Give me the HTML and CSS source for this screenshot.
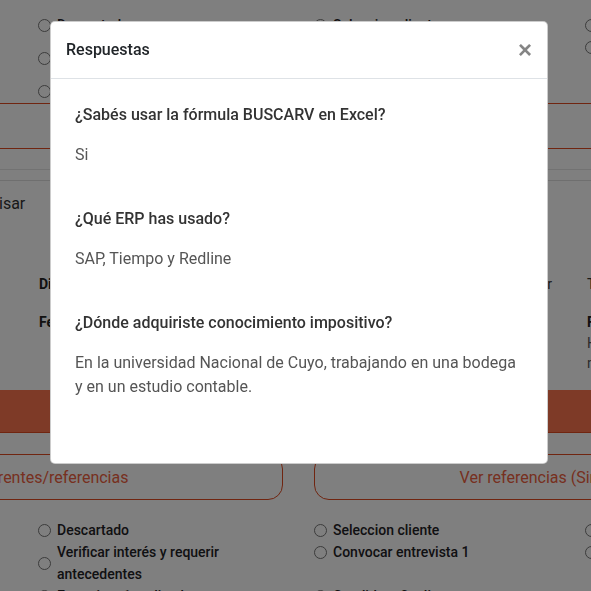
FILE: index.html
```html
<!DOCTYPE html>
<html lang="es">
<head>
<meta charset="utf-8">
<title>Respuestas</title>
<link rel="stylesheet" href="styles.css">
</head>
<body>
<div class="page">
  <div class="radios">
    <label class="radio"><span class="dot"></span><span class="lbl">Descartado</span></label>
    <label class="radio"><span class="dot"></span><span class="lbl">Seleccion cliente</span></label>
    <label class="radio"><span class="dot"></span><span class="lbl">Contratado</span></label>
    <label class="radio"><span class="dot"></span><span class="lbl">Verificar interés y requerir antecedentes</span></label>
    <label class="radio"><span class="dot"></span><span class="lbl">Convocar entrevista 1</span></label>
    <label class="radio"><span class="dot"></span><span class="lbl">En espera</span></label>
    <label class="radio"><span class="dot"></span><span class="lbl">Entrevista 1 realizada</span></label>
    <label class="radio"><span class="dot"></span><span class="lbl">Candidato finalista</span></label>
  </div>
  <div class="btn-row">
    <div class="box-outline"></div>
    <div class="box-outline"></div>
  </div>
  <div class="card-end"></div>

  <div class="card">
    <div class="card-head">Revisar</div>
    <div class="info">
      <div class="cell"><b>Disponibilidad:</b> Full time</div>
      <div class="cell right">Pretensión salarial: a convenir</div>
      <div class="cell">Teléfono: 261 555 0123</div>
      <div class="cell"><b>Fecha de nacimiento:</b> 12/03/1995</div>
      <div class="cell"></div>
      <div class="cell"><b>Formación:</b><p class="para">Hizo la carrera de Contador Público<br>nacional en la UNCuyo</p></div>
    </div>
    <div class="bar"></div>
    <div class="btn-row">
      <button class="btn-outline left">Ver referentes/referencias</button>
      <button class="btn-outline right">Ver referencias (Sin referencias)</button>
    </div>
    <div class="radios">
      <label class="radio"><span class="dot"></span><span class="lbl">Descartado</span></label>
      <label class="radio"><span class="dot"></span><span class="lbl">Seleccion cliente</span></label>
      <label class="radio"><span class="dot"></span><span class="lbl">Contratado</span></label>
      <label class="radio"><span class="dot"></span><span class="lbl">Verificar interés y requerir antecedentes</span></label>
      <label class="radio"><span class="dot"></span><span class="lbl">Convocar entrevista 1</span></label>
      <label class="radio"><span class="dot"></span><span class="lbl">En espera</span></label>
      <label class="radio"><span class="dot"></span><span class="lbl">Entrevista 1 realizada</span></label>
      <label class="radio"><span class="dot"></span><span class="lbl">Candidato finalista</span></label>
    </div>
  </div>
</div>

<div class="backdrop"></div>

<div class="modal">
  <div class="modal-header">
    <h5 class="modal-title">Respuestas</h5>
    <button class="close" aria-label="Cerrar">×</button>
  </div>
  <div class="modal-body">
    <p class="q">¿Sabés usar la fórmula BUSCARV en Excel?</p>
    <p class="a">Si</p>
    <p class="q">¿Qué ERP has usado?</p>
    <p class="a">SAP, Tiempo y Redline</p>
    <p class="q">¿Dónde adquiriste conocimiento impositivo?</p>
    <p class="a">En la universidad Nacional de Cuyo, trabajando en una bodega y en un estudio contable.</p>
  </div>
</div>
</body>
</html>
```

FILE: styles.css
```css
html, body {
  margin: 0;
  padding: 0;
  overflow: hidden;
  height: 100%;
  background: #ffffff;
  font-family: Roboto, "Liberation Sans", sans-serif;
  color: #212529;
}

.page {
  width: 1200px;
  margin-left: -300px;
  padding-top: 14px;
}

/* radio grid */
.radios {
  display: grid;
  grid-template-columns: 276px 271px 271px;
  margin-left: 338px;
  align-items: start;
}
.radio {
  display: flex;
  align-items: center;
  gap: 6px;
  font-size: 14px;
  font-weight: 500;
  line-height: 22px;
  color: #1f2226;
}
.dot {
  flex: none;
  width: 11px;
  height: 11px;
  border: 1px solid #777;
  border-radius: 50%;
  background: #fff;
}
.lbl { max-width: 210px; }

/* outlined buttons */
.btn-row {
  display: flex;
  gap: 31px;
  margin-left: 58px;
  margin-top: 1px;
}
.box-outline,
.btn-outline {
  flex: none;
  box-sizing: border-box;
  width: 525px;
  height: 46px;
  border: 1px solid #e04a20;
  border-radius: 15px;
  background: #fff;
}
.btn-outline {
  color: #ee6040;
  font-family: Roboto, "Liberation Sans", sans-serif;
  font-size: 16px;
  text-align: center;
  padding: 0;
}
.btn-outline.left { padding-left: 30px; }
.btn-outline.right { padding-right: 6px; }

.card-end {
  margin-top: 20px;
  border-bottom: 1px solid #e4e4e4;
}

.card {
  margin-top: 10px;
  border-top: 1px solid #dedede;
  padding-top: 11px;
}
.card-head {
  margin-left: 273px;
  font-size: 16px;
  line-height: 24px;
  color: #333;
}

.info {
  display: grid;
  grid-template-columns: 270px 278px 300px;
  row-gap: 16px;
  margin-left: 339px;
  margin-top: 57px;
  font-size: 14px;
  line-height: 22px;
  color: #333;
}
.info b { font-weight: 700; color: #222; }
.info .right { text-align: right; padding-right: 35px; }
.para {
  margin: 0;
  line-height: 20px;
  color: #555;
}

.bar {
  margin-top: 17px;
  height: 42px;
  background: #fc744e;
  border-bottom: 1px solid #e04a20;
}
.card .btn-row { margin-top: 21px; }
.card .radios { margin-top: 19px; }

/* overlay */
.backdrop {
  position: fixed;
  inset: 0;
  background: rgba(0, 0, 0, 0.5);
}

.modal {
  position: fixed;
  left: 50px;
  top: 21px;
  width: 498px;
  box-sizing: border-box;
  background: #fff;
  border: 1px solid rgba(0, 0, 0, 0.2);
  border-radius: 5px;
}
.modal-header {
  display: flex;
  align-items: center;
  justify-content: space-between;
  padding: 16px 15px;
  border-bottom: 1px solid #dee2e6;
}
.modal-title {
  margin: 0;
  font-size: 16px;
  font-weight: 500;
  line-height: 24px;
  color: #212529;
}
.close {
  border: 0;
  background: transparent;
  padding: 0;
  margin-right: 0;
  font-family: "Liberation Sans", Arial, sans-serif;
  font-size: 24px;
  font-weight: 700;
  line-height: 24px;
  color: #858585;
}
.modal-body {
  padding: 24px;
}
.q {
  margin: 0 0 16px;
  font-size: 16px;
  font-weight: 500;
  line-height: 24px;
  color: #333;
}
.a {
  margin: 0 0 40px;
  font-size: 16px;
  line-height: 24px;
  color: #555;
}
.a:last-child { margin-bottom: 40px; }
```
